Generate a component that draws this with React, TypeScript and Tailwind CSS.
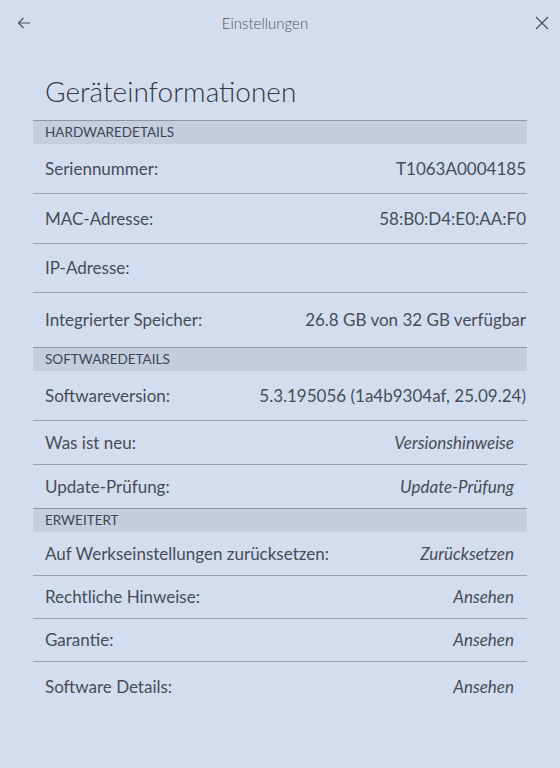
import { type ReactNode } from "react";

type Row = { label: string; value?: string; link?: boolean; h: string; last?: boolean };

const hardware: Row[] = [
  { label: "Seriennummer:", value: "T1063A0004185", h: "h-[50px]" },
  { label: "MAC-Adresse:", value: "58:B0:D4:E0:AA:F0", h: "h-[50px]" },
  { label: "IP-Adresse:", h: "h-[49px]" },
  { label: "Integrierter Speicher:", value: "26.8 GB von 32 GB verfügbar", h: "h-[54px]", last: true },
];

const software: Row[] = [
  { label: "Softwareversion:", value: "5.3.195056 (1a4b9304af, 25.09.24)", h: "h-[50px]" },
  { label: "Was ist neu:", value: "Versionshinweise", link: true, h: "h-[44px]" },
  { label: "Update-Prüfung:", value: "Update-Prüfung", link: true, h: "h-[43px]", last: true },
];

const advanced: Row[] = [
  { label: "Auf Werkseinstellungen zurücksetzen:", value: "Zurücksetzen", link: true, h: "h-[44px]" },
  { label: "Rechtliche Hinweise:", value: "Ansehen", link: true, h: "h-[43px]" },
  { label: "Garantie:", value: "Ansehen", link: true, h: "h-[43px]" },
  { label: "Software Details:", value: "Ansehen", link: true, h: "h-[50px]", last: true },
];

const SectionHeader = ({ children }: { children: ReactNode }) => (
  <div className="h-[24px] border-t border-[#8f96a6] bg-[#c5cde0] pl-[12px] flex items-center text-[13.5px] text-[#3f4550]">
    {children}
  </div>
);

const InfoRow = ({ row }: { row: Row }) => (
  <div
    className={`${row.h} flex items-center justify-between pl-[12px] text-[17px] text-[#464c58] ${
      row.last ? "" : "border-b border-[#9aa1b1]"
    }`}
  >
    <span>{row.label}</span>
    {row.value && (
      <span className={row.link ? "italic pr-[13px]" : "pr-[1px]"}>{row.value}</span>
    )}
  </div>
);

const App = () => {
  return (
    <div
      className="w-[560px] h-[768px] bg-[#d4ddef] overflow-hidden"
      style={{ fontFamily: "Lato, 'Open Sans', sans-serif" }}
    >
      <div className="h-[46px] flex items-center pl-[16px] pr-[10px] text-[#4a505c]">
        <svg width="16" height="14" viewBox="0 0 16 14" fill="none" stroke="#4a505c" strokeWidth="1.2">
          <path d="M14 7H2.5M7.5 2 2.5 7l5 5" />
        </svg>
        <span className="flex-1 text-center pr-[36px] text-[15px] font-light text-[#50565f]">Einstellungen</span>
        <svg width="16" height="16" viewBox="0 0 16 16" fill="none" stroke="#4a505c" strokeWidth="1.2">
          <path d="M2 2l12 12M14 2 2 14" />
        </svg>
      </div>

      <div className="pt-[29px] pb-[13px] pl-[45px] text-[28px] leading-[32px] font-light text-[#323743]">
        Geräteinformationen
      </div>

      <div className="mx-[33px]">
        <SectionHeader>HARDWAREDETAILS</SectionHeader>
        {hardware.map((r) => (
          <InfoRow key={r.label} row={r} />
        ))}
        <SectionHeader>SOFTWAREDETAILS</SectionHeader>
        {software.map((r) => (
          <InfoRow key={r.label} row={r} />
        ))}
        <SectionHeader>ERWEITERT</SectionHeader>
        {advanced.map((r) => (
          <InfoRow key={r.label} row={r} />
        ))}
      </div>
    </div>
  );
};

export default App;
